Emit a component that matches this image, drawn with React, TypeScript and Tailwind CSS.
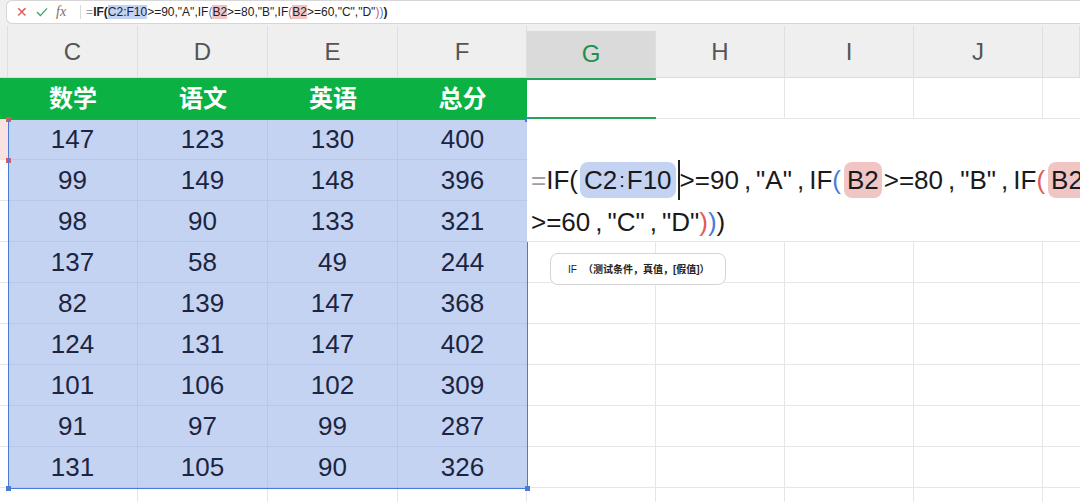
import React from 'react';

const COLS = 'grid grid-cols-[8px_130px_130px_130px_129px_129px_129px_129px_129px_1fr]';
const LETTERS = ['', 'C', 'D', 'E', 'F', 'G', 'H', 'I', 'J', ''];
const HEADS = ['数学', '语文', '英语', '总分'];
const DATA = [
  [147, 123, 130, 400],
  [99, 149, 148, 396],
  [98, 90, 133, 321],
  [137, 58, 49, 244],
  [82, 139, 147, 368],
  [124, 131, 147, 402],
  [101, 106, 102, 309],
  [91, 97, 99, 287],
  [131, 105, 90, 326],
];

const FONT = "font-['Liberation_Sans','Noto_Sans_CJK_SC',sans-serif]";

function FormulaBar() {
  return (
    <div className="h-[26px] bg-[#f0f0f0] pl-[6px]">
      <div className="h-[24px] bg-white border border-[#d6d6d6] rounded-tl-[6px] rounded-bl-[6px] border-r-0 flex items-center">
        <span className="ml-[9px] text-[#e0575a] text-[14px] leading-none">✕</span>
        <svg className="ml-[8px]" width="12" height="10" viewBox="0 0 12 10">
          <path d="M1 5.2 L4.4 8.6 L11 1.4" fill="none" stroke="#3aa86b" strokeWidth="1.4" />
        </svg>
        <span className="ml-[8px] text-[#707070] text-[14px] italic font-['Liberation_Serif',serif] leading-none">fx</span>
        <div className="ml-[14px] w-px h-[14px] bg-[#d8d8d8]" />
        <div className={`ml-[5px] text-[12px] text-[#222] ${FONT} whitespace-nowrap`}>
          <span className="text-[#999]">=</span>
          <span className="font-bold">IF(</span>
          <span className="bg-[#c5d3f2]">C2:F10</span>
          <span>&gt;=90,"A",IF</span>
          <span className="text-[#4a7bd6]">(</span>
          <span className="bg-[#f2c5c5]">B2</span>
          <span>&gt;=80,"B",IF</span>
          <span className="text-[#e05a5a]">(</span>
          <span className="bg-[#f2c5c5]">B2</span>
          <span>&gt;=60,"C","D"</span>
          <span className="text-[#e05a5a]">)</span>
          <span className="text-[#4a7bd6]">)</span>
          <span className="font-bold">)</span>
        </div>
      </div>
    </div>
  );
}

function HeaderRow() {
  return (
    <div className={`${COLS} h-[52px] bg-[#efefef] border-b border-[#dcdcdc]`}>
      {LETTERS.map((l, i) => (
        <div
          key={i}
          className={`border-r border-[#dedede] flex items-center justify-center text-[24px] ${FONT} ${
            l === 'G' ? 'bg-[#dadada] text-[#1d8f4e] mt-[5px]' : 'text-[#555]'
          }`}
        >
          {l}
        </div>
      ))}
    </div>
  );
}

function TitleRow() {
  return (
    <div className={`${COLS} h-[41px]`}>
      <div className="bg-[#0bb143]" />
      {HEADS.map((h) => (
        <div key={h} className={`bg-[#0bb143] flex items-center justify-center text-white font-bold text-[24px] ${FONT}`}>
          {h}
        </div>
      ))}
      <div className="border-t-2 border-b-2 border-[#22a559] bg-white" />
      <div className="border-r border-b border-[#e6e6e6]" />
      <div className="border-r border-b border-[#e6e6e6]" />
      <div className="border-r border-b border-[#e6e6e6]" />
      <div className="border-b border-[#e6e6e6]" />
    </div>
  );
}

function DataRow({ vals, first }: { vals: number[]; first: boolean }) {
  return (
    <div className={`${COLS} h-[41px]`}>
      <div className={first ? 'bg-[#fbe2e2] border-b border-[#e6e6e6]' : 'border-b border-[#e6e6e6]'} />
      {vals.map((v, i) => (
        <div
          key={i}
          className={`bg-[#c5d3f2] border-b border-[#b7c6ea] flex items-center justify-center text-[26px] text-[#1b2541] ${FONT} ${
            i < 3 ? 'border-r' : ''
          }`}
        >
          {v}
        </div>
      ))}
      <div className="border-r border-b border-[#e6e6e6]" />
      <div className="border-r border-b border-[#e6e6e6]" />
      <div className="border-r border-b border-[#e6e6e6]" />
      <div className="border-r border-b border-[#e6e6e6]" />
      <div className="border-b border-[#e6e6e6]" />
    </div>
  );
}

function Handle({ className }: { className: string }) {
  return <div className={`absolute w-[5px] h-[5px] ${className}`} />;
}

function Editor() {
  return (
    <div className={`absolute left-[527px] top-[119px] right-0 h-[123px] bg-white border-b border-[#e6e6e6] ${FONT} text-[26px] text-[#1a1a1a] whitespace-nowrap overflow-hidden pl-[4px] pt-[40px]`}>
      <div className="h-[42px] flex items-center">
        <span className="text-[#a0a0a0]">=</span>
        <span>IF(</span>
        <span className="ml-[2px] bg-[#c5d3f2] rounded-[8px] px-[4px] h-[36px] flex items-center">
          C2<span className="mx-[2px] text-[20px]">:</span>F10
        </span>
        <span className="ml-[2px] shrink-0 w-[2px] h-[40px] bg-[#222]" />
        <span>&gt;=90</span>
        <span className="mx-[5px]">,</span>
        <span>"A"</span>
        <span className="mx-[5px]">,</span>
        <span>IF</span>
        <span className="text-[#4a7bd6]">(</span>
        <span className="ml-[3px] bg-[#f2c5c5] rounded-[8px] px-[3px] h-[36px] flex items-center">B2</span>
        <span className="ml-[2px]">&gt;=80</span>
        <span className="mx-[5px]">,</span>
        <span>"B"</span>
        <span className="mx-[5px]">,</span>
        <span>IF</span>
        <span className="text-[#e05a5a]">(</span>
        <span className="ml-[3px] bg-[#f2c5c5] rounded-[8px] px-[3px] h-[36px] flex items-center">B2</span>
      </div>
      <div className="h-[42px] flex items-center">
        <span>&gt;=60</span>
        <span className="mx-[5px]">,</span>
        <span>"C"</span>
        <span className="mx-[5px]">,</span>
        <span>"D"</span>
        <span className="text-[#e05a5a]">)</span>
        <span className="text-[#4a7bd6]">)</span>
        <span>)</span>
      </div>
    </div>
  );
}

export default function App() {
  return (
    <div className="relative w-[1080px] h-[502px] bg-white overflow-hidden">
      <FormulaBar />
      <HeaderRow />
      <TitleRow />
      {DATA.map((r, i) => (
        <DataRow key={i} vals={r} first={i === 0} />
      ))}
      <div className={`${COLS} h-[20px]`}>
        <div />
        {[0, 1, 2, 3, 4, 5, 6, 7].map((i) => (
          <div key={i} className="border-r border-[#e6e6e6]" />
        ))}
        <div />
      </div>

      {/* B2 reference */}
      <div className="absolute left-0 top-[119px] w-[9px] h-[41px] border-r border-[#e05a5a]" />
      <Handle className="left-[6px] top-[117px] bg-[#e05a5a]" />
      <Handle className="left-[6px] top-[158px] bg-[#e05a5a]" />

      {/* selection C2:F10 */}
      <div className="absolute left-[8px] top-[119px] w-[520px] h-[370px] border border-[#4a7bd6]" />
      <Handle className="left-[525px] top-[117px] bg-[#4a7bd6]" />
      <Handle className="left-[6px] top-[486px] bg-[#4a7bd6]" />
      <Handle className="left-[525px] top-[486px] bg-[#4a7bd6]" />

      <Editor />

      <div className={`absolute left-[550px] top-[253px] w-[176px] h-[32px] bg-white border border-[#d4d4d4] rounded-[8px] flex items-center pl-[17px] text-[10px] text-[#222] ${FONT}`}>
        <span>IF</span>
        <span className="ml-[6px] font-bold">（测试条件，真值，[假值]）</span>
      </div>
    </div>
  );
}
